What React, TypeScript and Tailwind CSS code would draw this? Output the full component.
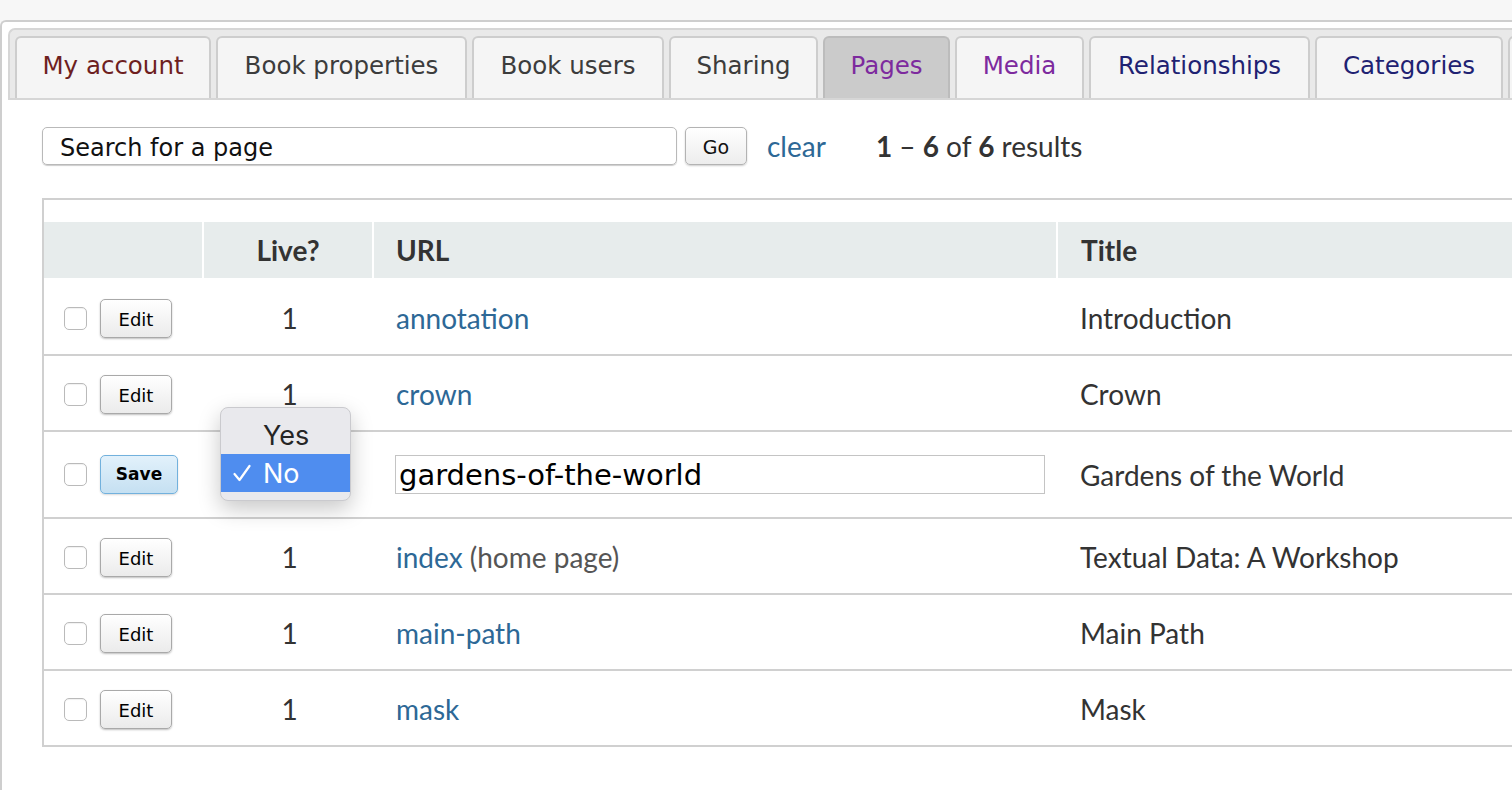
import React from 'react';

type Tab = { label: string; width: string; color: string; active?: boolean };

const tabs: Tab[] = [
  { label: 'My account', width: 'w-[196px]', color: 'text-[#6e1f1f]' },
  { label: 'Book properties', width: 'w-[251px]', color: 'text-[#3c3c3c]' },
  { label: 'Book users', width: 'w-[192px]', color: 'text-[#3c3c3c]' },
  { label: 'Sharing', width: 'w-[149px]', color: 'text-[#3c3c3c]' },
  { label: 'Pages', width: 'w-[127px]', color: 'text-[#7d2a9e]', active: true },
  { label: 'Media', width: 'w-[129px]', color: 'text-[#7d2a9e]' },
  { label: 'Relationships', width: 'w-[221px]', color: 'text-[#1f2272]' },
  { label: 'Categories', width: 'w-[188px]', color: 'text-[#1f2272]' },
];

type Page = { slug: string; title: string; live: number; note?: string; editing?: boolean };

const pages: Page[] = [
  { slug: 'annotation', title: 'Introduction', live: 1 },
  { slug: 'crown', title: 'Crown', live: 1 },
  { slug: 'gardens-of-the-world', title: 'Gardens of the World', live: 0, editing: true },
  { slug: 'index', title: 'Textual Data: A Workshop', live: 1, note: '(home page)' },
  { slug: 'main-path', title: 'Main Path', live: 1 },
  { slug: 'mask', title: 'Mask', live: 1 },
];

function Checkbox() {
  return (
    <input
      type="checkbox"
      className="appearance-none w-[23px] h-[23px] shrink-0 rounded-[5px] border-[1.5px] border-[#bababa] bg-white shadow-[inset_0_1px_1px_rgba(0,0,0,0.06)]"
    />
  );
}

// the native select popup, shown open over the Live? cell
function LiveMenu() {
  return (
    <div className="absolute left-[16px] top-[-25px] z-10 w-[131px] rounded-[8px] border border-[#cacace] bg-[#e9e9ed] py-[8px] shadow-[0_8px_22px_rgba(0,0,0,0.22)] font-['Inter',sans-serif] text-[27px] leading-none">
      <div className="h-[38px] flex items-center pl-[42px] text-[#252525]">Yes</div>
      <div className="h-[38px] flex items-center pl-[12px] bg-[#4f8def] text-white">
        <svg width="18" height="18" viewBox="0 0 18 18" fill="none">
          <polyline points="1.5,10 6.5,16 16.5,2" stroke="white" strokeWidth="2.2" strokeLinecap="round" strokeLinejoin="round" />
        </svg>
        <span className="ml-[12px]">No</span>
      </div>
    </div>
  );
}

export default function App() {
  return (
    <div className="h-screen overflow-hidden bg-[#f7f7f7] pt-5 font-['Lato',sans-serif] text-[#333]">
      <div className="h-full bg-white border-t-2 border-l-2 border-[#cecece] rounded-tl-[6px]">
        {/* Tabs */}
        <div className="pl-[6px] pt-[6px]">
          <div className="flex gap-[5px] h-[72px] bg-[#e9e9e9] border-t-2 border-l-2 border-b-2 border-[#d6d6d6] rounded-tl-[7px] pl-[5px] pt-[6px]">
            {tabs.map((tab) => (
              <div
                key={tab.label}
                className={`${tab.width} h-[62px] shrink-0 flex items-center justify-center pb-[3px] rounded-t-[6px] border-2 border-b-0 font-['DejaVu_Sans',sans-serif] text-[24.5px] ${tab.color} ${
                  tab.active ? 'bg-[#cbcbcb] border-[#bcbcbc]' : 'bg-[#f5f5f5] border-[#cdcdcd]'
                }`}
              >
                {tab.label}
              </div>
            ))}
            {/* next tab, only its edge is on screen */}
            <div className="w-[150px] h-[62px] shrink-0 rounded-t-[6px] border-2 border-b-0 border-[#cdcdcd] bg-[#f5f5f5]" />
          </div>
        </div>

        <div className="pl-[40px] pt-[27px]">
          {/* Search */}
          <div className="flex items-center h-[38px]">
            <input
              readOnly
              value="Search for a page"
              className="w-[635px] h-[38px] rounded-[5px] border-[1.5px] border-[#b9b9b9] shadow-[0_1px_1px_rgba(0,0,0,0.2)] pl-[17px] pt-[3px] font-['DejaVu_Sans',sans-serif] text-[24px] text-[#111] outline-none"
            />
            <button className="ml-[8px] w-[62px] h-[38px] pt-[2px] rounded-[5px] border-[1.5px] border-[#b3b3b3] bg-linear-to-b from-white to-[#ededed] shadow-[0_1px_2px_rgba(0,0,0,0.2)] font-['DejaVu_Sans',sans-serif] text-[19px] text-[#111]">
              Go
            </button>
            <a className="ml-[20px] text-[28px] text-[#2d6896]">clear</a>
            <span className="ml-[50px] text-[28px] text-[#333]">
              <b>1</b> – <b>6</b> of <b>6</b> results
            </span>
          </div>

          {/* Pages table */}
          <div className="mt-[33px] w-[1600px] border-t-2 border-l-2 border-[#d0d0d0] pt-[22px] text-[28px]">
            <div className="grid grid-cols-[158px_168px_682px_1fr] gap-x-[2px] h-[56px] font-bold">
              <div className="bg-[#e7ecec]" />
              <div className="bg-[#e7ecec] flex items-center justify-center">Live?</div>
              <div className="bg-[#e7ecec] flex items-center pl-[22px]">URL</div>
              <div className="bg-[#e7ecec] flex items-center pl-[23px]">Title</div>
            </div>

            {pages.map((p, i) => (
              <div
                key={p.slug}
                className={`grid grid-cols-[158px_168px_682px_1fr] gap-x-[2px] border-b-2 border-[#d0d0d0] ${
                  p.editing ? 'h-[87px]' : i === 0 ? 'h-[78px] pt-[4px]' : 'h-[76px] pt-[2px]'
                }`}
              >
                <div className="flex items-center pl-[20px] gap-[13px]">
                  <Checkbox />
                  {p.editing ? (
                    <button className="w-[78px] h-[39px] rounded-[5px] border-[1.5px] border-[#72b1dd] bg-linear-to-b from-[#e2f1fb] to-[#c5e0f2] shadow-[0_1px_2px_rgba(0,0,0,0.15)] font-['DejaVu_Sans',sans-serif] font-bold text-[17px] text-black">
                      Save
                    </button>
                  ) : (
                    <button className="w-[72px] h-[39px] pt-[2px] rounded-[5px] border-[1.5px] border-[#a9a9a9] bg-linear-to-b from-white to-[#ebebeb] shadow-[0_1px_2px_rgba(0,0,0,0.25)] font-['DejaVu_Sans',sans-serif] text-[18px] text-black">
                      Edit
                    </button>
                  )}
                </div>
                <div className="relative flex items-center justify-center pl-[3px]">
                  {p.editing ? <LiveMenu /> : p.live}
                </div>
                <div className="flex items-center pl-[21px]">
                  {p.editing ? (
                    <input
                      readOnly
                      value={p.slug}
                      className="w-[650px] h-[39px] border-[1.5px] border-[#c4c4c4] pl-[3px] pt-[2px] font-['DejaVu_Sans',sans-serif] text-[29px] text-black outline-none"
                    />
                  ) : (
                    <span className="pl-px">
                      <a className="text-[#2d6896]">{p.slug}</a>
                      {p.note && <span className="text-[#555]"> {p.note}</span>}
                    </span>
                  )}
                </div>
                <div className="flex items-center pl-[22px]">{p.title}</div>
              </div>
            ))}
          </div>
        </div>
      </div>
    </div>
  );
}
